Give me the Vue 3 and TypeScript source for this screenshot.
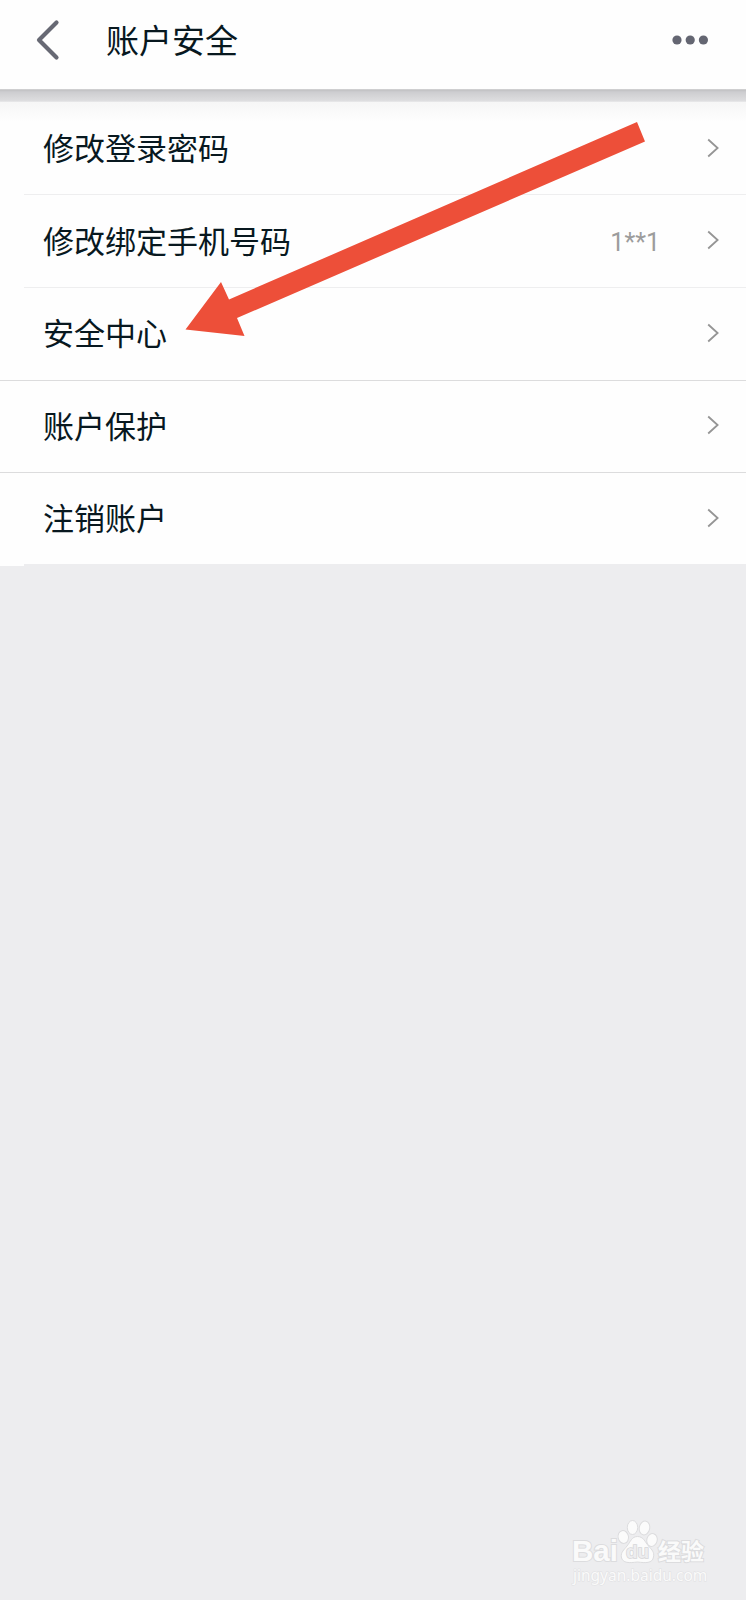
<script setup lang="ts">
interface Row {
  label: string
  value?: string
  divider: 'inset' | 'full' | 'last'
}

const rows: Row[] = [
  { label: '修改登录密码', divider: 'inset' },
  { label: '修改绑定手机号码', value: '1**1', divider: 'inset' },
  { label: '安全中心', divider: 'full' },
  { label: '账户保护', divider: 'full' },
  { label: '注销账户', divider: 'last' },
]
</script>

<template>
  <div class="page">
    <header class="bar">
      <svg class="back" width="26" height="42" viewBox="0 0 26 42">
        <path d="M21.5 3.5 L4 21 L21.5 38.5" />
      </svg>
      <h1 class="title">账户安全</h1>
      <svg class="more" width="38" height="12" viewBox="0 0 38 12">
        <circle cx="6" cy="6" r="4.6" />
        <circle cx="19.2" cy="6" r="4.6" />
        <circle cx="32.4" cy="6" r="4.6" />
      </svg>
    </header>
    <div class="shade"></div>
    <main class="list">
      <div v-for="row in rows" :key="row.label" class="row" :class="row.divider">
        <span class="label">{{ row.label }}</span>
        <span v-if="row.value" class="value">{{ row.value }}</span>
        <svg class="chevron" width="12" height="20" viewBox="0 0 12 20">
          <path d="M1.2 1.5 L10.6 10 L1.2 18.5" />
        </svg>
      </div>
    </main>

    <svg class="pointer" width="746" height="400" viewBox="0 0 746 400">
      <polygon points="185.5,329.5 221,282 229,299.5 637,122 645,141.5 237,318 244.5,336" />
    </svg>

    <div class="watermark">
      <svg class="paw" width="42" height="46" viewBox="0 0 42 46">
        <ellipse cx="6.3" cy="18" rx="5.2" ry="6.5" transform="rotate(-12 6.3 18)" />
        <ellipse cx="15.5" cy="8.5" rx="5.2" ry="7" />
        <ellipse cx="27.5" cy="9" rx="5.2" ry="7" transform="rotate(12 27.5 9)" />
        <ellipse cx="35" cy="21" rx="5.2" ry="6.5" transform="rotate(15 35 21)" />
        <path d="M20.5 17.5 C26.5 17.5 28 23 31.5 27 C35 31 37.5 33 36.5 38 C35.5 44.5 28.5 44 20.5 43 C12.5 44 5.5 44.5 4.3 38 C3.8 33 7 31 10 27 C13.5 23 14.5 17.5 20.5 17.5 Z" />
      </svg>
      <span class="wm bai">Bai</span>
      <span class="wm du">du</span>
      <span class="wm jy">经验</span>
      <span class="wm site">jingyan.baidu.com</span>
    </div>
  </div>
</template>

<style>
body {
  margin: 0;
  background: #ededef;
}
</style>

<style scoped>
.page {
  position: relative;
  width: 746px;
  height: 1600px;
  overflow: hidden;
  background: #ededef;
  font-family: "Noto Sans CJK SC", sans-serif;
  color: #08181f;
}
.bar {
  display: flex;
  align-items: center;
  box-sizing: border-box;
  height: 89px;
  padding: 0 37px 9px 35px;
  background: #fefefe;
}
.back {
  flex: none;
}
.back path {
  fill: none;
  stroke: #676974;
  stroke-width: 4.2;
  stroke-linecap: round;
  stroke-linejoin: round;
}
.title {
  margin: 0 auto 2px 45px;
  font-size: 33px;
  font-weight: 400;
  line-height: 48px;
}
.more {
  fill: #646672;
}
.shade {
  height: 13px;
  background: linear-gradient(#d4d4d5 0, #c4c4c6 1.5px, #cdcdd0 3px, #d3d3d5 6px, #dedee0 12px, #ededee 13px);
}
.list {
  padding-top: 1px;
  background: linear-gradient(#f6f6f6, #fefefe 20px);
}
.row {
  position: relative;
  display: flex;
  align-items: center;
  box-sizing: border-box;
  height: 92.5px;
  padding: 0 27px 3px 43px;
}
.row::after {
  content: "";
  position: absolute;
  left: 0;
  right: 0;
  bottom: 0;
  height: 1px;
  background: #dcdcdd;
}
.inset::after {
  left: 24px;
  bottom: 0.5px;
  background: #eeeeef;
}
.last::after {
  left: 24px;
  height: 2px;
  background: #ededef;
}
.label {
  flex: 1;
  margin-bottom: 1px;
  font-size: 31px;
  line-height: 44px;
}
.value {
  margin: 5px 47px 0 0;
  font-family: Roboto, sans-serif;
  font-size: 25px;
  line-height: 36px;
  color: #9c9c9c;
}
.chevron {
  flex: none;
}
.chevron path {
  fill: none;
  stroke: #959595;
  stroke-width: 1.8;
}
.pointer {
  position: absolute;
  left: 0;
  top: 0;
}
.pointer polygon {
  fill: #ed4f39;
}
.watermark {
  position: absolute;
  left: 566px;
  top: 1518px;
  width: 150px;
  height: 70px;
}
.paw {
  position: absolute;
  left: 51px;
  top: 1px;
  fill: #fbfbfb;
  stroke: #dcdcde;
  stroke-width: 1;
}
.wm {
  position: absolute;
  white-space: nowrap;
  color: #fafafa;
  -webkit-text-stroke: 2px #dcdcde;
  paint-order: stroke fill;
}
.bai {
  left: 6px;
  top: 19px;
  font: 700 29.5px/28px "Liberation Sans", sans-serif;
}
.du {
  left: 60px;
  top: 24px;
  font: 700 19px/20px "Liberation Sans", sans-serif;
  color: #ededef;
  -webkit-text-stroke: 1.5px #d6d6d8;
}
.jy {
  left: 92px;
  top: 21px;
  font: 700 23px/23px "Noto Sans CJK SC", sans-serif;
}
.site {
  left: 7px;
  top: 48px;
  font: 400 15.5px/18px "Noto Sans", sans-serif;
  -webkit-text-stroke: 1px #e0e0e2;
}
</style>
